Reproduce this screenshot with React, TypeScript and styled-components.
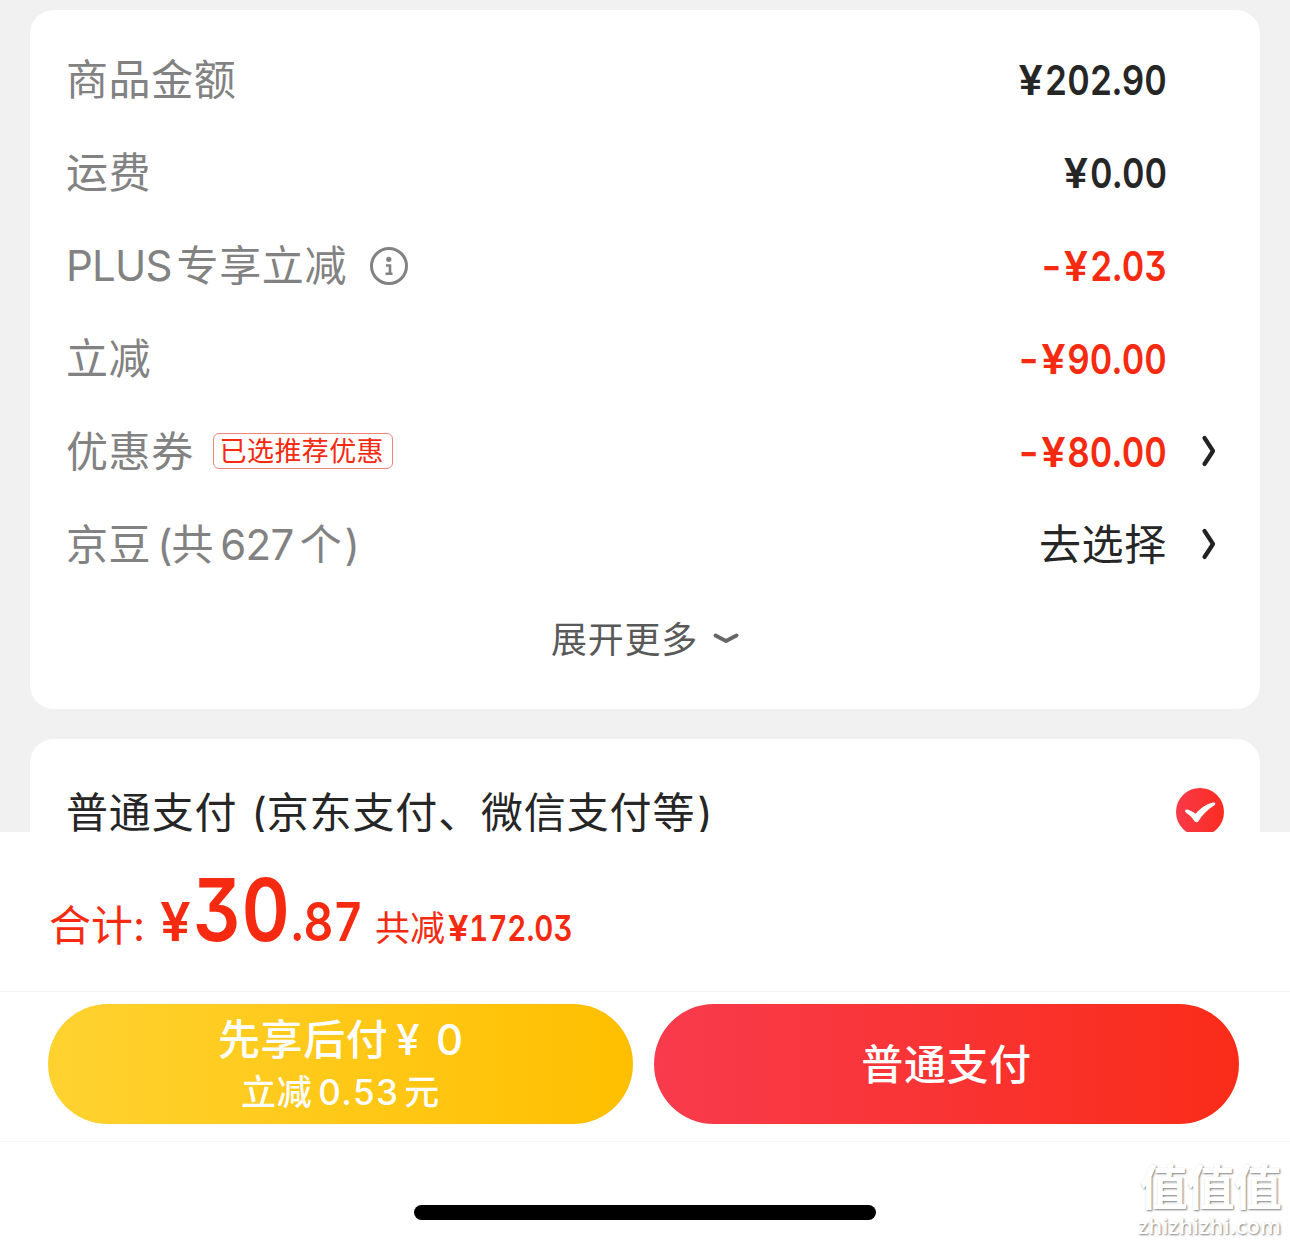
import React from "react";
import styled, { createGlobalStyle } from "styled-components";

const GlobalStyle = createGlobalStyle`
  * { box-sizing: border-box; }
  body {
    margin: 0;
    background: #fff;
    font-family: Inter, "Noto Sans CJK SC", sans-serif;
  }
`;

const RED = "#f52a10";

const Page = styled.main`
  width: 1290px;
  height: 1244px;
  display: flex;
  flex-direction: column;
  overflow: hidden;
  background: #fff;
`;

const ScrollArea = styled.section`
  height: 832px;
  flex: none;
  overflow: hidden;
  display: flex;
  flex-direction: column;
  gap: 30px;
  padding: 10px 30px 0;
  background: #f1f1f1;
`;

const Card = styled.div`
  flex: none;
  padding: 24px 36px;
  border-radius: 24px;
  background: #fff;
`;

const Row = styled.div`
  display: flex;
  align-items: center;
  height: 93px;
`;

const Label = styled.div<{ $dark?: boolean }>`
  display: flex;
  align-items: center;
  flex: 1;
  padding: ${(p) => (p.$dark ? "2px 0 0" : "0 0 1px")};
  font-size: 42px;
  line-height: 60px;
  letter-spacing: ${(p) => (p.$dark ? 0.85 : 0.6)}px;
  white-space: nowrap;
  color: ${(p) => (p.$dark ? "#262626" : "#828282")};
`;

const Latin = styled.span<{ $spacing?: number; $before?: number; $after?: number }>`
  letter-spacing: ${(p) => p.$spacing ?? 0}px;
  margin-left: ${(p) => p.$before ?? 0}px;
  margin-right: ${(p) => p.$after ?? 0}px;
`;

const Amount = styled.div<{ $red?: boolean }>`
  display: flex;
  font-size: 41.5px;
  font-weight: 600;
  font-feature-settings: "cv09", "tnum";
  line-height: 60px;
  margin-right: 57px;
  padding-bottom: 2px;
  transform: scaleX(0.84);
  transform-origin: right center;
  color: ${(p) => (p.$red ? RED : "#262626")};
`;

const WideSign = styled.span<{ $gap: number }>`
  display: inline-block;
  margin-right: ${(p) => p.$gap}px;
  transform: scaleX(1.24);
`;

const Choice = styled.div`
  font-size: 42px;
  line-height: 60px;
  letter-spacing: 0.7px;
  margin-right: 57px;
  padding-bottom: 2px;
  color: #262626;
`;

const ArrowSlot = styled.span`
  display: flex;
  width: 16px;
  margin: 0 8px 0 -24px;
  padding-bottom: 3px;
`;

const Tag = styled.span`
  display: flex;
  align-items: center;
  justify-content: center;
  width: 180px;
  height: 36px;
  margin: 0 0 2px 19px;
  padding: 1px 2px 0 0;
  border: 1px solid #f08478;
  border-radius: 6px;
  font-size: 27px;
  line-height: 34px;
  letter-spacing: 0.4px;
  color: ${RED};
`;

const InfoSlot = styled.span`
  display: flex;
  margin-left: 22px;
  padding-bottom: 1px;
`;

const Expand = styled.div`
  display: flex;
  align-items: center;
  justify-content: center;
  gap: 15px;
  height: 93px;
  font-size: 36px;
  letter-spacing: 0.7px;
  color: #595959;
`;

const ExpandText = styled.span`
  padding-bottom: 4px;
`;

const PayRow = styled(Row)`
  margin-top: 2px;
`;

const TotalBar = styled.section`
  display: flex;
  align-items: baseline;
  flex: none;
  height: 159px;
  padding: 25px 49px 0;
  white-space: nowrap;
  color: ${RED};
`;

const TotalText = styled.span<{ $size: number; $width: number }>`
  width: ${(p) => p.$width}px;
  font-size: ${(p) => p.$size}px;
  line-height: 60px;
`;

const Figure = styled.span<{ $size: number; $width: number; $scale: number }>`
  width: ${(p) => p.$width}px;
  font-weight: 600;
  font-size: ${(p) => p.$size}px;
  font-feature-settings: "cv09", "tnum";
  line-height: 105px;
  transform: scaleX(${(p) => p.$scale});
  transform-origin: left center;
`;

const Actions = styled.section`
  display: flex;
  gap: 21px;
  flex: none;
  height: 151px;
  padding: 12px 48px 0;
  border-top: 1px solid #f3f3f3;
  border-bottom: 1px solid #f5f5f5;
`;

const PayButton = styled.button<{ $from: string; $to: string }>`
  display: flex;
  flex-direction: column;
  align-items: center;
  justify-content: center;
  width: 585px;
  height: 120px;
  padding: 2px 0 0;
  border: 0;
  border-radius: 60px;
  font-family: inherit;
  font-weight: 500;
  color: #fff;
  background: linear-gradient(90deg, ${(p) => p.$from}, ${(p) => p.$to});
`;

const ButtonTitle = styled.span`
  font-size: 42px;
  line-height: 54px;
  letter-spacing: 0.6px;
  word-spacing: 5px;
`;

const ButtonNote = styled.span`
  font-size: 35px;
  line-height: 50px;
  letter-spacing: 0.6px;
`;

const Footer = styled.footer`
  position: relative;
  display: flex;
  justify-content: center;
  flex: 1;
`;

const HomeIndicator = styled.div`
  width: 462px;
  height: 15px;
  margin-top: 63px;
  border-radius: 8px;
  background: #000;
`;

const Watermark = styled.div`
  position: absolute;
  right: 9px;
  top: 20px;
  display: flex;
  flex-direction: column;
  align-items: flex-end;
  color: #fff;
  text-shadow: 1px 1px 2px rgba(0, 0, 0, 0.5);
`;

const MarkName = styled.span`
  font-size: 48px;
  font-weight: 700;
  line-height: 52px;
  letter-spacing: -0.8px;
`;

const MarkSite = styled.span`
  font-family: "Open Sans", sans-serif;
  font-size: 22px;
  font-weight: 600;
  line-height: 22px;
`;

const Price = ({ value, off }: { value: string; off?: boolean }) => (
  <Amount $red={off}>
    {off && <WideSign $gap={4}>-</WideSign>}
    <WideSign $gap={5}>¥</WideSign>
    {value}
  </Amount>
);

const Arrow = () => (
  <ArrowSlot>
    <svg width="16" height="34" viewBox="0 0 16 34" fill="none">
      <path d="M4.5 4Q8.5 10 13 17Q8.5 24 4.5 30" stroke="#222" strokeWidth="4.2" strokeLinecap="round" strokeLinejoin="round" />
    </svg>
  </ArrowSlot>
);

const InfoIcon = () => (
  <InfoSlot>
    <svg width="40" height="40" viewBox="0 0 40 40" fill="none" stroke="#828282">
      <circle cx="20" cy="20" r="17.5" strokeWidth="3" />
      <circle cx="19.8" cy="13.3" r="2.6" fill="#828282" stroke="none" />
      <path d="M17 19.5h4v8M16.5 27.7h7" strokeWidth="2.6" />
    </svg>
  </InfoSlot>
);

const CheckIcon = () => (
  <svg width="48" height="48" viewBox="0 0 48 48">
    <defs>
      <linearGradient id="check" x1="0" x2="1" y1="0" y2="0">
        <stop stopColor="#f93a4a" />
        <stop offset="1" stopColor="#fb2c20" />
      </linearGradient>
    </defs>
    <circle cx="24" cy="24" r="24" fill="url(#check)" />
    <path
      d="M9.3 22C11 20.6 15 22.8 19.7 25.8C25 20 30 16.2 37 14.6C40 14.3 40 16.5 38 17.6C31.5 21.4 26.5 27 22.4 33.2Q20.5 35.2 18.5 33.2C15.6 29.2 13 26.6 9.8 24.6Q8.6 23.3 9.3 22Z"
      fill="#fff"
    />
  </svg>
);

export default function App() {
  return (
    <>
      <GlobalStyle />
      <Page>
        <ScrollArea>
          <Card>
            <Row>
              <Label>商品金额</Label>
              <Price value="202.90" />
            </Row>
            <Row>
              <Label>运费</Label>
              <Price value="0.00" />
            </Row>
            <Row>
              <Label>
                <Latin $spacing={-0.8} $after={5}>PLUS</Latin>专享立减
                <InfoIcon />
              </Label>
              <Price value="2.03" off />
            </Row>
            <Row>
              <Label>立减</Label>
              <Price value="90.00" off />
            </Row>
            <Row>
              <Label>
                优惠券<Tag>已选推荐优惠</Tag>
              </Label>
              <Price value="80.00" off />
              <Arrow />
            </Row>
            <Row>
              <Label>
                京豆<Latin $before={6} $spacing={-1}>(</Latin>共<Latin $before={6} $after={6} $spacing={-0.6}>627</Latin>个<Latin $before={2}>)</Latin>
              </Label>
              <Choice>去选择</Choice>
              <Arrow />
            </Row>
            <Expand>
              <ExpandText>展开更多</ExpandText>
              <svg width="26" height="14" viewBox="0 0 26 14" fill="none">
                <path d="M2.5 3.5L13 9L23.5 3.5" stroke="#666" strokeWidth="3.8" strokeLinecap="round" strokeLinejoin="round" />
              </svg>
            </Expand>
          </Card>
          <Card>
            <PayRow>
              <Label $dark>
                普通支付<Latin $before={14}>(</Latin>京东支付、微信支付等<Latin $before={2}>)</Latin>
              </Label>
              <CheckIcon />
            </PayRow>
          </Card>
        </ScrollArea>
        <TotalBar>
          <TotalText $size={42} $width={111}>合计:</TotalText>
          <Figure $size={53} $width={33} $scale={1.03}>¥</Figure>
          <Figure $size={87} $width={98} $scale={0.86}>30</Figure>
          <Figure $size={53} $width={84} $scale={0.87}>.87</Figure>
          <TotalText $size={35} $width={75}>共减</TotalText>
          <Figure $size={36} $width={150} $scale={0.82}>
            <WideSign $gap={3}>¥</WideSign>172.03
          </Figure>
        </TotalBar>
        <Actions>
          <PayButton $from="#ffd230" $to="#ffbf00">
            <ButtonTitle>
              先享后付<Latin $before={8}>¥ 0</Latin>
            </ButtonTitle>
            <ButtonNote>
              立减<Latin $before={6} $after={5} $spacing={1.4}>0.53</Latin>元
            </ButtonNote>
          </PayButton>
          <PayButton $from="#f83b4d" $to="#fa2c19">
            <ButtonTitle>普通支付</ButtonTitle>
          </PayButton>
        </Actions>
        <Footer>
          <HomeIndicator />
          <Watermark>
            <MarkName>值值值</MarkName>
            <MarkSite>zhizhizhi.com</MarkSite>
          </Watermark>
        </Footer>
      </Page>
    </>
  );
}
